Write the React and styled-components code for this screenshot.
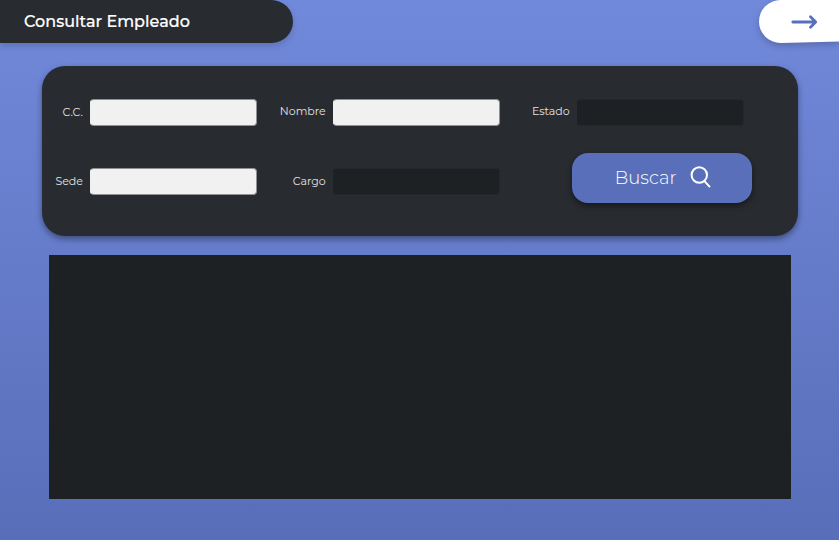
import React from "react";
import styled, { createGlobalStyle } from "styled-components";

const GlobalStyle = createGlobalStyle`
  *, *::before, *::after { box-sizing: border-box; }
  body {
    margin: 0;
    overflow: hidden;
    font-family: Montserrat, Inter, "Open Sans", sans-serif;
  }
`;

const Page = styled.main`
  display: flex;
  flex-direction: column;
  width: 839px;
  height: 540px;
  background: linear-gradient(180deg, #7189da 0%, #586eb9 100%);
`;

const Header = styled.header`
  display: flex;
  justify-content: space-between;
  height: 43px;
`;

const TitleTab = styled.h1`
  display: flex;
  align-items: center;
  width: 293px;
  height: 43px;
  margin: 0;
  padding-left: 24px;
  border-radius: 0 22px 22px 0;
  background: #282b30;
  box-shadow: 0 3px 6px rgba(0, 0, 0, 0.16);
  color: #fff;
  font-size: 16px;
  font-weight: 500;
  -webkit-text-stroke: 0.2px #fff;
  letter-spacing: 0.03px;
`;

const BackButton = styled.button`
  width: 80px;
  height: 43px;
  padding: 0;
  border: 0;
  background: none;
  filter: drop-shadow(0 3px 3px rgba(0, 0, 0, 0.2));
`;

/* The lower edge rises slightly toward the right side. */
const BackShape = styled.span`
  display: flex;
  align-items: center;
  width: 80px;
  height: 43px;
  padding-left: 32px;
  border-radius: 22px 0 0 22px;
  background: #fff;
  clip-path: polygon(0 0, 100% 0, 100% 41.6px, 22px 43px, 0 43px);
`;

const SearchPanel = styled.form`
  display: grid;
  grid-template-columns: 48px 167px 76px 167px 77px 167px;
  grid-template-rows: 27px 27px;
  row-gap: 42px;
  width: 756px;
  height: 170px;
  margin: 23px 0 0 41.7px;
  padding-top: 33px;
  border-radius: 23px;
  background: #282b30;
  box-shadow: 0 3px 6px rgba(0, 0, 0, 0.4);
`;

const Label = styled.label`
  align-self: center;
  justify-self: end;
  padding: 0 7px ${({ $lift }) => $lift || "2px"} 0;
  color: #e3e3e3;
  font-size: 11px;
  line-height: 14px;
  letter-spacing: ${({ $tracking }) => $tracking || "0"};
  white-space: nowrap;
`;

const Field = styled.input`
  width: 167px;
  height: 27px;
  padding: 0 6px;
  border: 1px solid ${({ $dark }) => ($dark ? "#24282b" : "#8f9193")};
  border-left-color: ${({ $dark }) => ($dark ? "#1e2124" : "#f1f1f1")};
  border-radius: 4px;
  outline: 0;
  background: ${({ $dark }) => ($dark ? "#1e2124" : "#f1f1f1")};
  color: ${({ $dark }) => ($dark ? "#e3e3e3" : "#282b30")};
  font: 11px Montserrat, Inter, sans-serif;
`;

const SearchButton = styled.button`
  display: flex;
  grid-column: 5 / 7;
  align-items: center;
  align-self: start;
  justify-self: end;
  gap: 13px;
  width: 180px;
  height: 50px;
  margin: -15px -8px -8px 0;
  padding: 0 0 0 43px;
  border: 0;
  border-radius: 16px;
  background: #5a6fba;
  box-shadow: 0 3px 6px rgba(0, 0, 0, 0.45);
  color: #fff;
  font-family: inherit;
  font-size: 18px;
  font-weight: 300;
  letter-spacing: 0.05px;
`;

const Results = styled.section`
  width: 742px;
  height: 244px;
  margin: 19px 0 0 49px;
  background: #1e2124;
`;

const ArrowIcon = () => (
  <svg width="28" height="16" viewBox="0 0 28 16" fill="none" stroke="#5870bb" strokeWidth="2.8" strokeLinecap="round" strokeLinejoin="round">
    <path d="M1.8 8H24.5M19.5 2.8L24.7 8L19.5 13.2" />
  </svg>
);

const SearchIcon = () => (
  <svg width="22" height="24" viewBox="0 0 22 24" fill="none" stroke="#fff" strokeWidth="2">
    <circle cx="9.3" cy="9" r="7.7" />
    <path d="M14.2 14.9L20 21.1" />
  </svg>
);

export default function App() {
  return (
    <>
      <GlobalStyle />
      <Page>
        <Header>
          <TitleTab>Consultar Empleado</TitleTab>
          <BackButton type="button" aria-label="Volver">
            <BackShape>
              <ArrowIcon />
            </BackShape>
          </BackButton>
        </Header>
        <SearchPanel onSubmit={(event) => event.preventDefault()}>
          <Label htmlFor="cc" $tracking="-0.05px">C.C.</Label>
          <Field id="cc" />
          <Label htmlFor="nombre" $lift="4px">Nombre</Label>
          <Field id="nombre" />
          <Label htmlFor="estado" $lift="4px">Estado</Label>
          <Field id="estado" $dark />
          <Label htmlFor="sede" $tracking="-0.1px">Sede</Label>
          <Field id="sede" />
          <Label htmlFor="cargo">Cargo</Label>
          <Field id="cargo" $dark />
          <SearchButton type="submit">
            Buscar
            <SearchIcon />
          </SearchButton>
        </SearchPanel>
        <Results aria-label="Resultados" />
      </Page>
    </>
  );
}
